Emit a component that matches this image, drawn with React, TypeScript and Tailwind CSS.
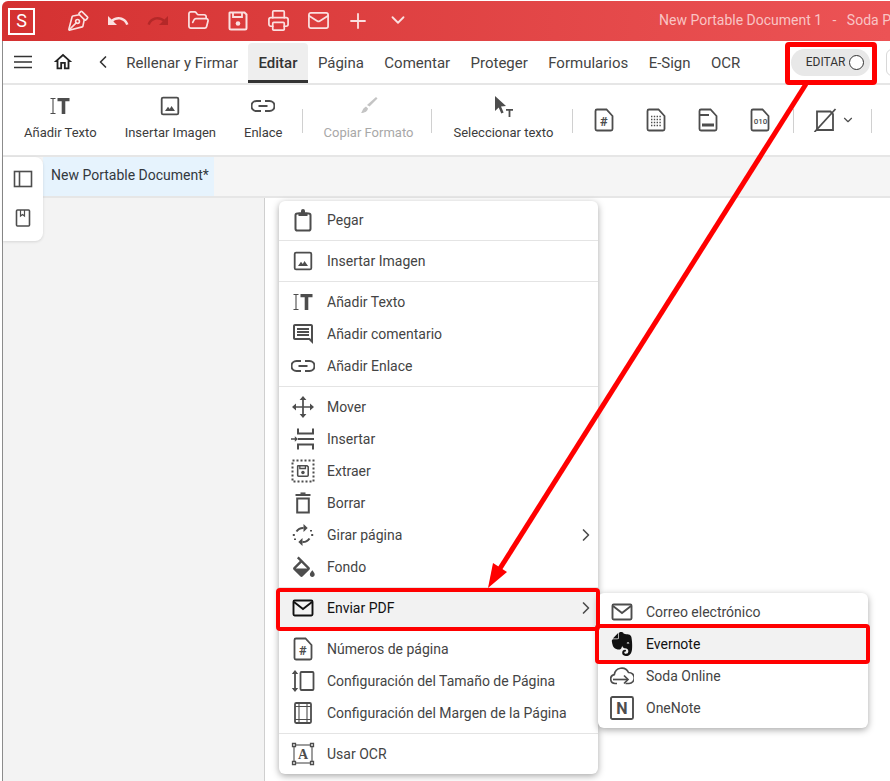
import type { ReactNode } from 'react';
import { ChevronDown, ChevronLeft, ChevronRight, FolderOpen, Mail, PenTool, Plus, Printer } from 'lucide-react';
import { SiEvernote } from 'react-icons/si';

const ink = '#4d4d4d';

function Svg({ children, size = 24, className }: { children: ReactNode; size?: number; className?: string }) {
  return (
    <svg width={size} height={size} viewBox="0 0 24 24" fill="none" stroke="none" className={className}>
      {children}
    </svg>
  );
}

// Icons, all drawn on a 24 grid
const TextIcon = () => (
  <Svg>
    <path d="M2.500 4.500h5M2.500 19.500h5M5 4.500v15" stroke={ink} strokeWidth="1.100" />
    <path d="M9.500 4h12v3.200h-4.200V20h-3.600V7.200H9.500z" fill={ink} />
  </Svg>
);
const ImageIcon = () => (
  <Svg>
    <rect x="3.700" y="3.700" width="16.600" height="16.600" rx="1.400" stroke={ink} strokeWidth="1.800" />
    <path d="M7 17l3-4.200 1.800 2.200 1.700-3 3.500 5z" fill={ink} />
  </Svg>
);
const LinkIcon = () => (
  <Svg>
    <path d="M10 7H5.500a5 5 0 0 0 0 10H10M14 7h4.500a5 5 0 0 1 0 10H14M7.500 12h9" stroke={ink} strokeWidth="2" />
  </Svg>
);
const BrushIcon = () => (
  <Svg>
    <path d="M20 3l1.500 1.500-8 8L11 11z" fill="#c4c4c4" />
    <path d="M10 12.500l2 2c-.500 3-3.500 4.500-7 4.500 1.500-1.500 1-4 5-6.500z" fill="#c4c4c4" />
  </Svg>
);
const CursorIcon = () => (
  <Svg>
    <path d="M4 2l11 10-5 .600 2.600 6-2.300 1-2.600-6L4 17z" fill={ink} />
    <path d="M15 15h7v1.800h-2.600V23h-1.800v-6.200H15z" fill={ink} />
  </Svg>
);
const SaveIcon = ({ color = '#fbe0e0' }: { color?: string }) => (
  <Svg>
    <path d="M4 3.500h14.500L20.500 5.500V19a1.500 1.500 0 0 1-1.500 1.500H5A1.500 1.500 0 0 1 3.500 19V4z" stroke={color} strokeWidth="2" />
    <path d="M7 4v4h9V4" stroke={color} strokeWidth="1.800" />
    <circle cx="12" cy="14.500" r="2.300" fill={color} />
  </Svg>
);
const DocFrame = ({ children }: { children?: ReactNode }) => (
  <Svg>
    <path d="M5 1.500h9.500l6 6.500v13a1.500 1.500 0 0 1-1.500 1.500H5A1.500 1.500 0 0 1 3.500 21V3A1.500 1.500 0 0 1 5 1.500z" stroke={ink} strokeWidth="1.800" />
    {children}
  </Svg>
);
const DocHash = () => (
  <DocFrame>
    <text x="11.800" y="17.500" textAnchor="middle" fontSize="13" fontWeight="700" fill={ink} fontFamily="Roboto, sans-serif">#</text>
  </DocFrame>
);
const DocDots = () => (
  <DocFrame>
    <path d="M7 8.500h10M7 11.500h10M7 14.500h10M7 17.500h10" stroke={ink} strokeWidth="1.400" strokeDasharray="1.400 1.400" />
  </DocFrame>
);
const DocBar = () => (
  <DocFrame>
    <path d="M4 7h9" stroke={ink} strokeWidth="2" />
    <rect x="6" y="15.500" width="12" height="3" fill={ink} />
  </DocFrame>
);
const DocBin = () => (
  <DocFrame>
    <text x="12.500" y="16" textAnchor="middle" fontSize="8" fontWeight="500" fill={ink} fontFamily="Roboto, sans-serif">010</text>
  </DocFrame>
);
const DocSlash = () => (
  <Svg>
    <path d="M4 3.500h13.500l2.500 2.500v16h-16z" stroke={ink} strokeWidth="1.800" />
    <path d="M1.500 24L22.500 1" stroke={ink} strokeWidth="1.800" />
  </Svg>
);
const ClipboardIcon = () => (
  <Svg>
    <rect x="4.500" y="5.500" width="15" height="17" rx="1.800" stroke={ink} strokeWidth="2" />
    <path d="M7.500 4.500h2.500V3a2 2 0 0 1 4 0v1.500h2.500v3.500h-9z" fill={ink} />
  </Svg>
);
const CommentIcon = () => (
  <Svg>
    <path
      d="M21.990 4c0-1.100-.890-2-1.990-2H4c-1.100 0-2 .900-2 2v12c0 1.100.900 2 2 2h14l4 4-.010-18zM20 4v13.170L18.830 16H4V4h16zM6 12h12v2H6zm0-3h12v2H6zm0-3h12v2H6z"
      fill={ink}
    />
  </Svg>
);
const MoveIcon = () => (
  <Svg>
    <path d="M12 3v18M3 12h18" stroke={ink} strokeWidth="1.700" />
    <path d="M12 1l3.400 4H8.600zM12 23l3.400-4H8.600zM1 12l4-3.400v6.800zM23 12l-4-3.400v6.800z" fill={ink} />
  </Svg>
);
const InsertIcon = () => (
  <Svg>
    <path d="M7 1.500v5h15v-5M7 22.500v-5h15v5M7 12h16" stroke={ink} strokeWidth="2" />
    <path d="M0 12h5" stroke={ink} strokeWidth="1.500" />
    <path d="M7 12l-3.200-2.800v5.600z" fill={ink} />
  </Svg>
);
const ExtractIcon = () => (
  <Svg>
    <rect x="1.500" y="1.500" width="21" height="21" stroke={ink} strokeWidth="2" strokeDasharray="2 2" />
    <g transform="translate(4.500 4.500) scale(.62)">
      <path d="M4 3.500h14.500L20.500 5.500V19a1.500 1.500 0 0 1-1.500 1.500H5A1.500 1.500 0 0 1 3.500 19V4z" stroke={ink} strokeWidth="2.500" />
      <path d="M7 4v4h9V4" stroke={ink} strokeWidth="2.200" />
      <circle cx="12" cy="14.500" r="2.800" fill={ink} />
    </g>
  </Svg>
);
const TrashIcon = () => (
  <Svg>
    <path d="M4.500 4h15" stroke={ink} strokeWidth="2" />
    <path d="M9.500 2.200h5" stroke={ink} strokeWidth="1.500" />
    <path d="M6.200 7.500h11.600V21.500H6.200z" stroke={ink} strokeWidth="2" />
  </Svg>
);
const RotateIcon = () => (
  <Svg>
    <path d="M5.500 8.500A8 8 0 0 1 12.500 5" stroke={ink} strokeWidth="2" />
    <path d="M12.500 1l4.200 4-4.200 4z" fill={ink} />
    <path d="M18.500 15.500a8 8 0 0 1-7 3.500" stroke={ink} strokeWidth="2" />
    <path d="M11.500 23l-4.200-4 4.200-4z" fill={ink} />
    <path d="M2.800 11v2M4 15.500v1.500M21.200 11v2M20 7v1.500" stroke={ink} strokeWidth="2" />
  </Svg>
);
const FillIcon = () => (
  <Svg>
    <path
      d="M16.560 8.940L7.620 0 6.210 1.410l2.380 2.380-5.150 5.150c-.590.590-.590 1.540 0 2.120l5.500 5.500c.290.290.680.440 1.060.440s.770-.150 1.060-.440l5.500-5.500c.590-.580.590-1.530 0-2.120zM5.210 10L10 5.210 14.790 10H5.210zM19 11.500s-2 2.170-2 3.500c0 1.100.900 2 2 2s2-.900 2-2c0-1.330-2-3.500-2-3.500z"
      fill={ink}
      transform="translate(-1.500 1.500) scale(1.200)"
    />
  </Svg>
);
const EnvelopeIcon = ({ color = ink }: { color?: string }) => (
  <Svg>
    <rect x="2.500" y="4.500" width="19" height="15" rx="1.200" stroke={color} strokeWidth="1.900" />
    <path d="M3 6l9 7 9-7" stroke={color} strokeWidth="1.900" />
  </Svg>
);
const PageSizeIcon = () => (
  <Svg>
    <path d="M4 4v16" stroke={ink} strokeWidth="1.800" />
    <path d="M4 1l3.200 4H.800zM4 23l3.200-4H.800z" fill={ink} />
    <rect x="9.500" y="3" width="13" height="18" rx="1" stroke={ink} strokeWidth="1.800" />
  </Svg>
);
const MarginIcon = () => (
  <Svg>
    <rect x="4" y="2" width="16" height="20" rx="1.200" stroke={ink} strokeWidth="1.800" />
    <path d="M8 2v20M16 2v20M4 5.500h16M4 18.500h16" stroke={ink} strokeWidth="1.100" />
  </Svg>
);
const OcrIcon = () => (
  <Svg>
    <rect x="3" y="3" width="18" height="18" stroke={ink} strokeWidth="1.100" />
    <path d="M1.500 1.500h3v3h-3zM19.500 1.500h3v3h-3zM1.500 19.500h3v3h-3zM19.500 19.500h3v3h-3z" fill="#fff" stroke={ink} strokeWidth="1.300" />
    <text x="12" y="17" textAnchor="middle" fontSize="14" fontWeight="700" fill={ink} fontFamily="'Liberation Serif', serif">A</text>
  </Svg>
);
const CloudIcon = () => (
  <Svg>
    <path
      d="M7 19.500H5A4.500 4.500 0 0 1 4.300 10.600 7.500 7.500 0 0 1 18.500 8.500a5.500 5.500 0 0 1 .500 11h-3.500"
      stroke={ink}
      strokeWidth="1.700"
    />
    <path d="M3 15.500h15" stroke={ink} strokeWidth="1.700" />
    <path d="M14 11.500l4 4-4 4" stroke={ink} strokeWidth="1.700" />
  </Svg>
);
const OneNoteIcon = () => (
  <Svg>
    <rect x="1" y="1" width="22" height="22" rx="1.500" stroke={ink} strokeWidth="1.900" />
    <text x="12" y="18" textAnchor="middle" fontSize="16" fontWeight="700" fill={ink} fontFamily="Roboto, sans-serif">N</text>
  </Svg>
);
const PanelIcon = () => (
  <Svg>
    <rect x="3.500" y="4.500" width="17" height="15" stroke={ink} strokeWidth="1.600" />
    <path d="M8.500 4.500v15" stroke={ink} strokeWidth="1.600" />
  </Svg>
);
const BookmarkIcon = () => (
  <Svg>
    <rect x="5.500" y="4" width="13" height="16" rx="1" stroke={ink} strokeWidth="1.600" />
    <path d="M9.500 4v6l2-1.500 2 1.500V4" stroke={ink} strokeWidth="1.200" />
  </Svg>
);

type Row = { label: string; icon: ReactNode; more?: boolean };

const menuGroups: Row[][] = [
  [{ label: 'Pegar', icon: <ClipboardIcon /> }],
  [{ label: 'Insertar Imagen', icon: <ImageIcon /> }],
  [
    { label: 'Añadir Texto', icon: <TextIcon /> },
    { label: 'Añadir comentario', icon: <CommentIcon /> },
    { label: 'Añadir Enlace', icon: <LinkIcon /> },
  ],
  [
    { label: 'Mover', icon: <MoveIcon /> },
    { label: 'Insertar', icon: <InsertIcon /> },
    { label: 'Extraer', icon: <ExtractIcon /> },
    { label: 'Borrar', icon: <TrashIcon /> },
    { label: 'Girar página', icon: <RotateIcon />, more: true },
    { label: 'Fondo', icon: <FillIcon /> },
  ],
  [{ label: 'Enviar PDF', icon: <EnvelopeIcon color="#111" />, more: true }],
  [
    { label: 'Números de página', icon: <DocHash /> },
    { label: 'Configuración del Tamaño de Página', icon: <PageSizeIcon /> },
    { label: 'Configuración del Margen de la Página', icon: <MarginIcon /> },
  ],
  [{ label: 'Usar OCR', icon: <OcrIcon /> }],
];

const tabs = ['Rellenar y Firmar', 'Editar', 'Página', 'Comentar', 'Proteger', 'Formularios', 'E-Sign', 'OCR'];

function MenuRow({ row, dark }: { row: Row; dark?: boolean }) {
  return (
    <div className={`flex h-8 items-center gap-3 pl-3 pr-[2px] text-sm ${dark ? 'text-[#111]' : 'text-[#444]'}`}>
      <span className="flex w-6 justify-center">{row.icon}</span>
      <span className="flex-1 whitespace-nowrap">{row.label}</span>
      {row.more && <ChevronRight size={20} color={ink} />}
    </div>
  );
}

function RibbonItem({ label, icon, muted }: { label: string; icon: ReactNode; muted?: boolean }) {
  return (
    <div className="flex h-full flex-col items-center px-3 pt-[9px]">
      <span className="flex h-6 items-center">{icon}</span>
      <span className={`mt-[5px] whitespace-nowrap text-[13px] ${muted ? 'text-[#a8a8a8]' : 'text-[#3c3c3c]'}`}>{label}</span>
    </div>
  );
}

export default function App() {
  const quick = 'flex w-10 shrink-0 justify-center text-[#fbe0e0]';
  const divider = 'mt-[24px] h-[24px] w-px shrink-0 bg-[#d0d0d0]';

  return (
    <div className="relative h-[781px] w-[890px] overflow-hidden bg-white pl-[2px] pt-px font-['Roboto',sans-serif]">
      <div className="flex h-full flex-col">
        {/* Title bar */}
        <div className="flex h-10 shrink-0 items-center overflow-hidden rounded-tl-md bg-gradient-to-r from-[#d43131] to-[#ec5355]">
          <div className="ml-[6px] flex h-[27px] w-[27px] shrink-0 items-center justify-center border-2 border-white text-lg text-white">S</div>
          <div className="ml-[23px] flex">
            <span className={quick}><PenTool size={23} strokeWidth={1.7} className="-rotate-90" /></span>
            <span className={quick}>
              <svg width="24" height="24" viewBox="0 0 24 24" fill="currentColor"><path d="M12.500 8c-2.650 0-5.050.990-6.900 2.600L2 7v9h9l-3.620-3.620c1.390-1.160 3.160-1.880 5.120-1.880 3.540 0 6.550 2.310 7.600 5.500l2.370-.780C21.080 11.030 17.150 8 12.500 8z" /></svg>
            </span>
            <span className={quick}>
              <svg width="24" height="24" viewBox="0 0 24 24" fill="#b42828"><path d="M18.400 10.600C16.550 8.990 14.150 8 11.500 8c-4.650 0-8.580 3.030-9.960 7.220L3.900 16c1.050-3.190 4.050-5.500 7.600-5.500 1.950 0 3.730.720 5.120 1.880L13 16h9V7l-3.600 3.600z" /></svg>
            </span>
            <span className={quick}><FolderOpen size={23} strokeWidth={1.8} /></span>
            <span className={quick}><SaveIcon /></span>
            <span className={quick}><Printer size={23} strokeWidth={1.8} /></span>
            <span className={quick}><Mail size={23} strokeWidth={1.8} /></span>
            <span className={quick}><Plus size={24} strokeWidth={1.8} /></span>
            <span className={quick}><ChevronDown size={22} strokeWidth={2} /></span>
          </div>
          <span className="mb-0.5 ml-[241px] shrink-0 whitespace-pre text-sm text-[#f9c4c4]">New Portable Document 1   -   Soda PDF</span>
        </div>

        <div className="flex min-h-0 flex-1 flex-col border-l border-[#8c8c8c]">
          {/* Tabs */}
          <div className="flex h-[44px] shrink-0 items-center border-b-2 border-[#e6e6e6]">
            <span className="flex w-10 shrink-0 justify-center">
              <svg width="18" height="14" viewBox="0 0 18 14" stroke="#333" strokeWidth="1.700"><path d="M0 1.500h18M0 7h18M0 12.500h18" /></svg>
            </span>
            <span className="flex w-10 shrink-0 justify-center">
              <svg width="22" height="22" viewBox="0 0 24 24" fill="#222"><path d="M12 5.690l5 4.500V18h-2v-6H9v6H7v-7.810l5-4.500M12 3L2 12h3v8h6v-6h2v6h6v-8h3L12 3z" /></svg>
            </span>
            <span className="flex w-[33px] shrink-0 justify-center pl-[7px]"><ChevronLeft size={20} color="#333" /></span>
            {tabs.map(tab => (
              <div
                key={tab}
                className={`flex h-[40px] shrink-0 items-center self-end whitespace-nowrap rounded-t px-[10.2px] text-[15px] ${
                  tab === 'Editar' ? 'border-b-[3px] border-[#333] bg-[#eeeeee] pt-[3px] font-medium text-[#333]' : 'text-[#444]'
                }`}
              >
                {tab}
              </div>
            ))}
            <div className="ml-[41px] flex h-[27px] w-[79px] shrink-0 items-center justify-end gap-1 rounded-full bg-[#e8e8e8] pr-[6px] text-xs text-[#333]">
              EDITAR
              <span className="h-[15px] w-[15px] rounded-full border border-[#333] bg-white" />
            </div>
            <div className="ml-[16px] h-[27px] w-8 shrink-0 rounded-md border border-[#d8d8d8]" />
          </div>

          {/* Ribbon */}
          <div className="flex h-[72px] shrink-0 border-b-2 border-[#e6e6e6] pl-[9px]">
            <RibbonItem label="Añadir Texto" icon={<TextIcon />} />
            <div className="w-1" />
            <RibbonItem label="Insertar Imagen" icon={<ImageIcon />} />
            <div className="w-1" />
            <RibbonItem label="Enlace" icon={<LinkIcon />} />
            <div className={`ml-[7px] mr-[9px] ${divider}`} />
            <RibbonItem label="Copiar Formato" icon={<BrushIcon />} muted />
            <div className={`ml-[6px] mr-[9px] ${divider}`} />
            <RibbonItem label="Seleccionar texto" icon={<CursorIcon />} />
            <div className={`ml-[7px] mr-[5px] ${divider}`} />
            {[<DocHash key="hash" />, <DocDots key="dots" />, <DocBar key="bar" />, <DocBin key="bin" />].map(icon => (
              <span key={icon.key} className="mt-[23px] flex h-6 w-[52px] shrink-0 justify-center">{icon}</span>
            ))}
            <div className={`ml-[7px] ${divider}`} />
            <span className="ml-[19px] mt-[23px] flex h-6 shrink-0 items-center gap-1">
              <DocSlash />
              <ChevronDown size={14} color={ink} />
            </span>
            <div className={`ml-[16px] ${divider}`} />
          </div>

          {/* Document tabs */}
          <div className="flex h-[41px] shrink-0 border-b-2 border-[#e6e6e6] bg-[#f5f5f5] pl-10">
            <div className="flex items-center whitespace-nowrap bg-[#e6f3fd] pb-[3px] pl-2 pr-[5px] text-sm text-[#33383d]">New Portable Document*</div>
          </div>

          {/* Workspace */}
          <div className="flex min-h-0 flex-1">
            <div className="w-[262px] shrink-0 border-r border-[#cfcfcf] bg-[#f3f3f3]" />
            <div className="flex-1 bg-white" />
          </div>
        </div>
      </div>

      {/* Floating side panel */}
      <div className="absolute left-[3px] top-[157px] flex h-[84px] w-10 flex-col items-center gap-[15px] rounded-r-lg bg-white pt-[10px] shadow-[0_1px_3px_rgba(0,0,0,0.12)]">
        <PanelIcon />
        <BookmarkIcon />
      </div>

      {/* Context menu */}
      <div className="absolute left-[279px] top-[201px] w-[319px] divide-y divide-[#e4e4e4] rounded-md bg-white shadow-[0_2px_7px_rgba(0,0,0,0.35)]">
        {menuGroups.map(group => (
          <div key={group[0].label} className={`py-1 first:pt-[3px] ${group[0].label === 'Enviar PDF' ? 'bg-[#f2f2f2]' : ''}`}>
            {group.map(row => (
              <MenuRow key={row.label} row={row} dark={row.label === 'Enviar PDF'} />
            ))}
          </div>
        ))}
      </div>

      {/* Send submenu */}
      <div className="absolute left-[598px] top-[593px] w-[270px] rounded-md bg-white pb-1 pt-[3px] shadow-[0_2px_7px_rgba(0,0,0,0.35)]">
        <MenuRow row={{ label: 'Correo electrónico', icon: <EnvelopeIcon /> }} />
        <div className="bg-[#f2f2f2]">
          <MenuRow row={{ label: 'Evernote', icon: <SiEvernote size={24} color="#111" /> }} dark />
        </div>
        <MenuRow row={{ label: 'Soda Online', icon: <CloudIcon /> }} />
        <MenuRow row={{ label: 'OneNote', icon: <OneNoteIcon /> }} />
      </div>

      {/* Red annotations */}
      <div className="absolute left-[785px] top-[42px] h-[43px] w-[92px] rounded-sm border-[5px] border-[#ff0000]" />
      <div className="absolute left-[276px] top-[588px] h-[43px] w-[324px] rounded-sm border-4 border-[#ff0000]" />
      <div className="absolute left-[595px] top-[624px] h-[40px] w-[275px] rounded-sm border-4 border-[#ff0000]" />
      <svg className="absolute left-[480px] top-[80px]" width="335" height="515" viewBox="480 80 335 515">
        <path d="M806 84L499 570" stroke="#ff0000" strokeWidth="5" />
        <path d="M488 588l5-25 14 9z" fill="#ff0000" />
      </svg>
    </div>
  );
}
